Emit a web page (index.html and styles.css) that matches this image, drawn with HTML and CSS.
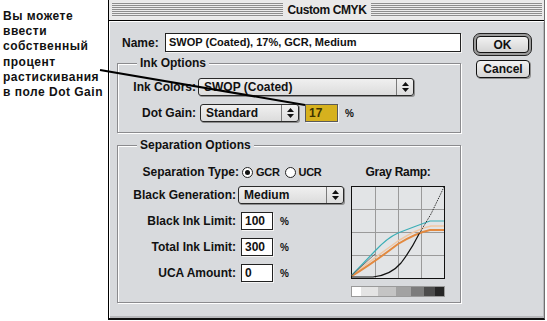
FILE: index.html
```html
<!DOCTYPE html>
<html>
<head>
  <title>Custom CMYK</title>
  <meta charset="utf-8">
  <link rel="stylesheet" href="styles.css">
</head>
<body>
  <div class="page">
    <p class="note">Вы можете<br>ввести<br>собственный<br>процент<br>растискивания<br>в поле Dot Gain</p>

    <div class="window">
      <div class="titlebar"><span class="title">Custom CMYK</span></div>
      <div class="dialog">
        <div class="main">
          <div class="name-row">
            <span class="name-label">Name:</span>
            <div class="field name-field">SWOP (Coated), 17%, GCR, Medium</div>
          </div>

          <div class="group ink">
            <span class="group-title">Ink Options</span>
            <div class="row">
              <span class="lbl">Ink Colors:</span>
              <div class="popup ink-colors">SWOP (Coated)<span class="arrows"><svg width="7" height="10" viewBox="0 0 7 10"><path d="M3.5 0L7 4H0z M3.5 10L7 6H0z" fill="#111"/></svg></span></div>
            </div>
            <div class="row">
              <span class="lbl">Dot Gain:</span>
              <div class="popup dot-gain">Standard<span class="arrows"><svg width="7" height="10" viewBox="0 0 7 10"><path d="M3.5 0L7 4H0z M3.5 10L7 6H0z" fill="#111"/></svg></span></div>
              <div class="field gain-field">17</div>
              <span class="pct">%</span>
            </div>
          </div>

          <div class="group sep">
            <span class="group-title">Separation Options</span>
            <div class="sep-body">
              <div class="sep-left">
                <div class="row">
                  <span class="lbl sep-type">Separation Type:</span>
                  <span class="radio on"></span><span class="radio-text">GCR</span>
                  <span class="radio"></span><span class="radio-text">UCR</span>
                </div>
                <div class="row gap5">
                  <span class="lbl wide">Black Generation:</span>
                  <div class="popup black-gen">Medium<span class="arrows"><svg width="7" height="10" viewBox="0 0 7 10"><path d="M3.5 0L7 4H0z M3.5 10L7 6H0z" fill="#111"/></svg></span></div>
                </div>
                <div class="row gap8">
                  <span class="lbl wide">Black Ink Limit:</span>
                  <div class="field num">100</div>
                  <span class="pct">%</span>
                </div>
                <div class="row gap8">
                  <span class="lbl wide">Total Ink Limit:</span>
                  <div class="field num">300</div>
                  <span class="pct">%</span>
                </div>
                <div class="row gap8">
                  <span class="lbl wide">UCA Amount:</span>
                  <div class="field num">0</div>
                  <span class="pct">%</span>
                </div>
              </div>

              <div class="ramp">
                <div class="ramp-label">Gray Ramp:</div>
                <svg class="ramp-graph" width="94" height="93" viewBox="0 0 94 93">
                  <rect x="0.5" y="0.5" width="93" height="92" fill="#e2e4e6" stroke="#111"/>
                  <g stroke="#9a9a9a" stroke-width="1">
                    <path d="M24.5 1V92 M47.5 1V92 M70.5 1V92 M1 23.5H93 M1 46.5H93 M1 69.5H93"/>
                  </g>
                  <path d="M1 89 Q22 73 47 55 Q66 43 80 40 L93 40" fill="none" stroke="#f1c7a4" stroke-width="1.5"/>
                  <path d="M1 90 Q22 77 47 58 Q65 47 79 44 L93 44" fill="none" stroke="#e3893f" stroke-width="2"/>
                  <path d="M1 89 L24 65 Q36 52 47 47 Q65 40 79 35 L93 35" fill="none" stroke="#3aaeb6" stroke-width="1.2"/>
                  <path d="M1 89 L24 68" fill="none" stroke="#555" stroke-width="0.8"/>
                  <path d="M1 91 L22 91 Q40 89 50 77 Q60 64 68 48" fill="none" stroke="#111" stroke-width="1.2"/>
                  <path d="M68 48 L80 28 L93 1" fill="none" stroke="#111" stroke-width="1" stroke-dasharray="1 1"/>
                </svg>
                <div class="ramp-bar"></div>
              </div>
            </div>
          </div>
        </div>

        <div class="buttons">
          <div class="btn-ring"><div class="btn">OK</div></div>
          <div class="btn cancel">Cancel</div>
        </div>
      </div>
    </div>

    <svg class="pointer" width="547" height="321" viewBox="0 0 547 321">
      <line x1="100" y1="70" x2="305" y2="105" stroke="#000" stroke-width="2"/>
    </svg>
  </div>
</body>
</html>
```

FILE: styles.css
```css
body {
  margin: 0;
  background: #fff;
  font-family: "Liberation Sans", Arial, sans-serif;
  font-size: 12px;
  font-weight: bold;
  color: #111;
}
.page {
  position: relative;
  display: flex;
  width: 547px;
  height: 321px;
}
.note {
  width: 108px;
  margin: 0;
  padding: 9px 0 0 3px;
  box-sizing: border-box;
  font-size: 12px;
  line-height: 15.2px;
  letter-spacing: 0.5px;
}
.pointer {
  position: absolute;
  top: 0;
  left: 0;
  pointer-events: none;
}

/* window frame */
.window {
  width: 437px;
  height: 320px;
  box-sizing: border-box;
  display: flex;
  flex-direction: column;
  border-left: 1px solid #000;
  border-right: 1px solid #6f6f6f;
  border-bottom: 2px solid #111;
  background: #d8dadd;
}
.titlebar {
  height: 21px;
  box-sizing: border-box;
  padding: 2px 2px 3px 3px;
  border-bottom: 1px solid #000;
  background: repeating-linear-gradient(to bottom, #ececec 0 1px, #8d8d8d 1px 2px) content-box, #e9e9e9;
  display: flex;
  justify-content: center;
  align-items: center;
}
.title {
  background: #e9e9e9;
  padding: 0 5px;
  line-height: 16px;
  letter-spacing: -0.4px;
}
.dialog {
  flex: 1;
  display: flex;
  padding: 12px 0 0 8px;
  box-shadow: inset 1px 1px 0 #fff, inset -1px -2px 0 #b8b9bc;
}
.main {
  width: 344px;
}

/* name */
.name-row {
  display: flex;
  align-items: center;
  height: 19px;
  padding-left: 5px;
}
.name-label {
  width: 43px;
}
.field {
  height: 18px;
  box-sizing: border-box;
  background: #fff;
  border: 1px solid #222;
  box-shadow: 1px 1px 0 #f4f4f4;
  padding-left: 3px;
  line-height: 16px;
}
.name-field {
  width: 296px;
  height: 19px;
  font-size: 11px;
  line-height: 17px;
}

/* group boxes */
.group {
  border: 1px solid #8b8b8e;
  box-shadow: 1px 1px 0 #fff, inset 1px 1px 0 #fff;
}
.group-title {
  display: table;
  margin: -8px 0 0 19px;
  padding: 0 3px;
  line-height: 14px;
  background: #d8dadd;
}
.ink {
  margin-top: 11px;
  padding-bottom: 10px;
}
.sep {
  margin-top: 12px;
  padding-bottom: 5px;
}
.row {
  display: flex;
  align-items: center;
  height: 18px;
  margin-top: 8px;
}
.lbl {
  width: 78px;
  text-align: right;
  white-space: nowrap;
}
.lbl.wide {
  width: 118px;
}
.lbl.sep-type {
  width: 121px;
}
.pct {
  margin-left: 7px;
  font-size: 10px;
}

/* popup menus */
.popup {
  height: 18px;
  box-sizing: border-box;
  display: flex;
  align-items: center;
  padding-left: 5px;
  border: 1px solid #2a2a2a;
  border-radius: 3px;
  background: linear-gradient(#f0f0f0, #dcdcdc);
  box-shadow: 1px 1px 0 #8e8e8e;
}
.arrows {
  margin-left: auto;
  width: 16px;
  height: 100%;
  display: flex;
  align-items: center;
  justify-content: center;
  border-left: 1px solid #7a7a7a;
}
.ink-colors {
  width: 216px;
  margin-left: 2px;
}
.dot-gain {
  width: 99px;
  margin-left: 4px;
}
.gain-field {
  width: 33px;
  margin-left: 6px;
  background: #d6b11e;
  border-color: #5a5a5a;
  color: #3e3300;
}
.black-gen {
  width: 106px;
  margin-left: 2px;
}

/* separation */
.sep-body {
  display: flex;
  margin-top: 11px;
}
.sep-left {
  flex: 1;
}
.sep-left .row:first-child {
  margin-top: 0;
}
.row.gap5 {
  margin-top: 5px;
}
.radio {
  width: 11px;
  height: 11px;
  box-sizing: border-box;
  border: 1px solid #222;
  border-radius: 50%;
  background: #fff;
  margin-left: 3px;
  display: flex;
  align-items: center;
  justify-content: center;
}
.radio + .radio-text {
  margin-left: 3px;
}
.radio-text + .radio {
  margin-left: 5px;
}
.radio.on::after {
  content: "";
  width: 5px;
  height: 5px;
  border-radius: 50%;
  background: #111;
}
.radio-text {
  font-size: 11px;
  letter-spacing: -0.3px;
}
.field.num {
  width: 32px;
  margin-left: 5px;
}

/* gray ramp */
.ramp {
  width: 94px;
  padding-right: 15px;
}
.ramp-label {
  line-height: 18px;
  text-align: center;
  white-space: nowrap;
  letter-spacing: -0.3px;
}
.ramp-graph {
  display: block;
  margin-top: 5px;
}
.ramp-bar {
  margin-top: 7px;
  height: 11px;
  box-sizing: border-box;
  border: 1px solid #9a9a9a;
  background: linear-gradient(to right, #fff 0 10%, #e4e4e4 10% 28%, #c4c4c4 28% 48%, #a2a2a2 48% 64%, #7c7c7c 64% 78%, #4c4c4c 78% 90%, #262626 90%);
}

/* buttons */
.buttons {
  margin-left: 12px;
  display: flex;
  flex-direction: column;
}
.btn-ring {
  width: 59px;
  height: 23px;
  box-sizing: border-box;
  border: 1px solid #222;
  border-radius: 7px;
  background: #9c9c9c;
  padding: 2px;
}
.btn {
  height: 100%;
  box-sizing: border-box;
  border: 1px solid #111;
  border-radius: 4px;
  background: linear-gradient(#f2f2f2, #d4d4d4);
  display: flex;
  align-items: center;
  justify-content: center;
}
.btn.cancel {
  width: 54px;
  height: 18px;
  margin: 4px 0 0 3px;
  box-shadow: 1px 1px 0 #8e8e8e;
}
```
